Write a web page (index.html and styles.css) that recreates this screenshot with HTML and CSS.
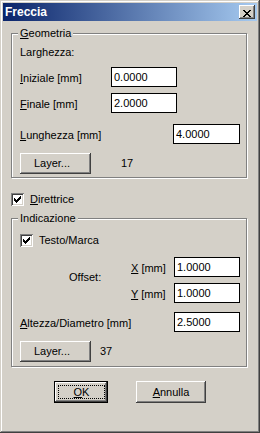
FILE: index.html
```html
<!DOCTYPE html>
<html lang="it">
<head>
<meta charset="UTF-8">
<meta name="viewport" content="width=device-width, initial-scale=1.0">
<title>Freccia</title>
<link rel="stylesheet" href="styles.css">
</head>
<body>

<div class="window">
  <!-- Title bar -->
  <div class="titlebar">
    <span class="title">Freccia</span>
    <button class="close-btn" title="Chiudi">
      <svg width="8" height="7" viewBox="0 0 8 7" shape-rendering="crispEdges"><path fill="#000" d="M0 0h2v1H0zM6 0h2v1H6zM1 1h2v1H1zM5 1h2v1H5zM2 2h4v1H2zM3 3h2v1H3zM2 4h4v1H2zM1 5h2v1H1zM5 5h2v1H5zM0 6h2v1H0zM6 6h2v1H6z"/></svg>
    </button>
  </div>

  <div class="client">
    <!-- Geometria -->
    <fieldset class="group group-geo">
      <legend><u>G</u>eometria</legend>
      <div class="caption">Larghezza:</div>
      <div class="row mt8">
        <label class="lbl lbl-short"><u>I</u>niziale [mm]</label>
        <input class="edit" type="text" value="0.0000">
      </div>
      <div class="row mt6">
        <label class="lbl lbl-short"><u>F</u>inale [mm]</label>
        <input class="edit" type="text" value="2.0000">
      </div>
      <div class="row mt11">
        <label class="lbl lbl-long"><u>L</u>unghezza [mm]</label>
        <input class="edit edit-wide" type="text" value="4.0000">
      </div>
      <div class="row mt9">
        <button class="btn btn-layer">Layer...</button>
        <span class="layer-num num-17">17</span>
      </div>
    </fieldset>

    <div class="check-row check-main">
      <span class="checkbox">
        <svg width="13" height="13" viewBox="0 0 13 13" shape-rendering="crispEdges"><path fill="#000" d="M3 5h1v3H3zM4 6h1v3H4zM5 7h1v3H5zM6 6h1v3H6zM7 5h1v3H7zM8 4h1v3H8zM9 3h1v3H9z"/></svg>
      </span>
      <span class="check-label"><u>D</u>irettrice</span>
    </div>

    <!-- Indicazione -->
    <fieldset class="group group-ind">
      <legend>Indicazione</legend>
      <div class="check-row">
        <span class="checkbox">
          <svg width="13" height="13" viewBox="0 0 13 13" shape-rendering="crispEdges"><path fill="#000" d="M3 5h1v3H3zM4 6h1v3H4zM5 7h1v3H5zM6 6h1v3H6zM7 5h1v3H7zM8 4h1v3H8zM9 3h1v3H9z"/></svg>
        </span>
        <span class="check-label">Testo/Marca</span>
      </div>

      <div class="offset">
        <div class="offset-cap">Offset:</div>
        <div class="offset-rows">
          <div class="row">
            <label class="lbl lbl-axis"><u>X</u> [mm]</label>
            <input class="edit" type="text" value="1.0000">
          </div>
          <div class="row mt6">
            <label class="lbl lbl-axis"><u>Y</u> [mm]</label>
            <input class="edit" type="text" value="1.0000">
          </div>
        </div>
      </div>

      <div class="row mt9">
        <label class="lbl lbl-alt"><u>A</u>ltezza/Diametro [mm]</label>
        <input class="edit" type="text" value="2.5000">
      </div>
      <div class="row mt9">
        <button class="btn btn-layer">Layer...</button>
        <span class="layer-num num-37">37</span>
      </div>
    </fieldset>

    <!-- Dialog buttons -->
    <div class="actions">
      <button class="btn btn-default btn-ok"><span class="focus"><u>O</u>K</span></button>
      <button class="btn btn-cancel"><u>A</u>nnulla</button>
    </div>
  </div>
</div>

</body>
</html>
```

FILE: styles.css
```css
body {
margin: 0;
font: 11px/13px "Liberation Sans", Arial, sans-serif;
color: #000;
background: #d4d0c8;
}

u {
text-decoration: underline;
text-underline-offset: 1px;
}

/* Window frame */
.window {
width: 260px;
height: 433px;
box-sizing: border-box;
padding: 3px;
background: #d4d0c8;
box-shadow: inset -1px -1px #404040, inset 1px 1px #d4d0c8, inset -2px -2px #808080, inset 2px 2px #fff;
}

.titlebar {
height: 18px;
display: flex;
align-items: flex-start;
padding: 0 2px;
background: linear-gradient(to right, #0a246a, #a6caf0);
}

.title {
flex: 1;
color: #fff;
font-size: 12px;
font-weight: bold;
line-height: 18px;
}

.close-btn {
width: 16px;
height: 14px;
margin-top: 2px;
padding: 3px 0 0 4px;
box-sizing: border-box;
border: 0;
background: #d4d0c8;
box-shadow: inset -1px -1px #404040, inset 1px 1px #fff, inset -2px -2px #808080, inset 2px 2px #d4d0c8;
}

.close-btn svg {
display: block;
}

/* Group boxes */
.group {
width: 236px;
box-sizing: border-box;
margin: 6px 0 0 8px;
border: 1px solid #808080;
box-shadow: 1px 1px #fff, inset 1px 1px #fff;
min-width: 0;
}

.group legend {
padding: 0 2px;
margin-left: -2px;
line-height: 13px;
background: #d4d0c8;
}

.group-geo {
padding: 6px 6px 3px 8px;
}

.group-ind {
padding: 9px 6px 4px 8px;
}

.caption {
height: 13px;
}

/* Label + edit rows */
.row {
display: flex;
align-items: center;
}

.mt6 { margin-top: 6px; }
.mt8 { margin-top: 8px; }
.mt9 { margin-top: 9px; }
.mt11 { margin-top: 11px; }

.lbl {
padding-top: 3px;
white-space: nowrap;
}

.lbl-short { width: 91px; }
.lbl-long { width: 153px; }
.lbl-alt { width: 154px; }
.lbl-axis { width: 43px; }

.edit {
width: 66px;
height: 20px;
box-sizing: border-box;
margin: 0;
padding: 0 2px;
border: 1px solid #000;
background: #fff;
font: inherit;
color: #000;
outline: none;
}

.edit-wide {
width: 67px;
}

/* Offset block */
.offset {
display: flex;
margin-top: 10px;
}

.offset-cap {
width: 62px;
margin-left: 49px;
padding-top: 14px;
}

/* Check boxes */
.check-row {
display: flex;
align-items: center;
height: 13px;
}

.check-main {
margin: 15px 0 0 8px;
}

.checkbox {
width: 13px;
height: 13px;
box-sizing: border-box;
background: #fff;
box-shadow: inset 1px 1px #808080, inset -1px -1px #fff, inset 2px 2px #404040, inset -2px -2px #d4d0c8;
}

.checkbox svg {
display: block;
}

.check-label {
margin-left: 6px;
}

/* Push buttons */
.btn {
height: 21px;
box-sizing: border-box;
margin: 0;
padding: 0;
border: 0;
background: #d4d0c8;
font: inherit;
color: #000;
box-shadow: inset -1px -1px #404040, inset 1px 1px #fff, inset -2px -2px #808080, inset 2px 2px #d4d0c8;
}

.btn-layer {
width: 71px;
padding-right: 7px;
}

.num-17 { margin-left: 30px; }
.num-37 { margin-left: 9px; }

.actions {
display: flex;
gap: 28px;
margin: 14px 0 0 51px;
}

.actions .btn {
height: 22px;
}

.btn-ok {
width: 54px;
display: flex;
padding: 4px 3px 4px 4px;
}

.btn-default {
box-shadow: inset 0 0 0 1px #000, inset -2px -2px #404040, inset 2px 2px #fff, inset -3px -3px #808080, inset 3px 3px #d4d0c8;
}

.focus {
flex: 1;
display: flex;
align-items: center;
justify-content: center;
border: 1px dotted #000;
}

.btn-cancel {
width: 70px;
}
```
